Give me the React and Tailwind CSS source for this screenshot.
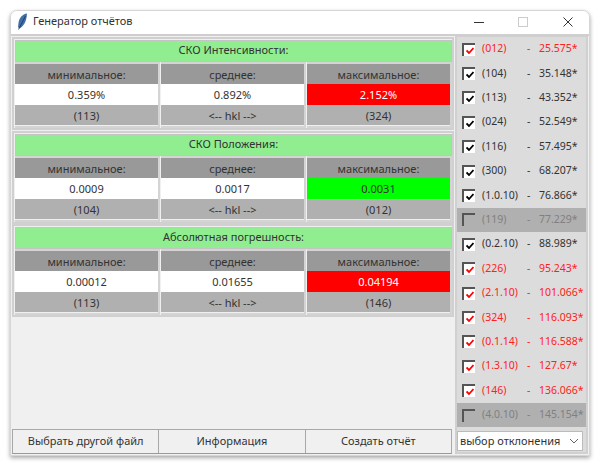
const sections = [
  { title: 'СКО Интенсивности:', min: '0.359%', avg: '0.892%', max: '2.152%', maxBg: 'bg-[#ff0000] text-white', hklMin: '(113)', hklMax: '(324)' },
  { title: 'СКО Положения:', min: '0.0009', avg: '0.0017', max: '0.0031', maxBg: 'bg-[#00ff00] text-[#333]', hklMin: '(104)', hklMax: '(012)' },
  { title: 'Абсолютная погрешность:', min: '0.00012', avg: '0.01655', max: '0.04194', maxBg: 'bg-[#ff0000] text-white', hklMin: '(113)', hklMax: '(146)' },
];

const peaks = [
  { hkl: '(012)', angle: '25.575*', state: 'bad' },
  { hkl: '(104)', angle: '35.148*' },
  { hkl: '(113)', angle: '43.352*' },
  { hkl: '(024)', angle: '52.549*' },
  { hkl: '(116)', angle: '57.495*' },
  { hkl: '(300)', angle: '68.207*' },
  { hkl: '(1.0.10)', angle: '76.866*' },
  { hkl: '(119)', angle: '77.229*', state: 'off' },
  { hkl: '(0.2.10)', angle: '88.989*' },
  { hkl: '(226)', angle: '95.243*', state: 'bad' },
  { hkl: '(2.1.10)', angle: '101.066*', state: 'bad' },
  { hkl: '(324)', angle: '116.093*', state: 'bad' },
  { hkl: '(0.1.14)', angle: '116.588*', state: 'bad' },
  { hkl: '(1.3.10)', angle: '127.67*', state: 'bad' },
  { hkl: '(146)', angle: '136.066*', state: 'bad' },
  { hkl: '(4.0.10)', angle: '145.154*', state: 'off' },
];

function StatColumn({ label, value, valueClass, hkl }) {
  return (
    <div className="flex flex-1 flex-col border-y-2 border-r-2 border-[#d4d4d4] text-center leading-[22px]">
      <div className="h-[20px] bg-[#999999] text-[#333]">{label}</div>
      <div className={`h-[21px] ${valueClass}`}>{value}</div>
      <div className="h-[20px] bg-[#b0b0b0] text-[#333]">{hkl}</div>
    </div>
  );
}

function Section({ s }) {
  return (
    <div className="flex h-[93px] flex-col border-2 border-[#d0d0d0] pt-[1px] pl-[1px]">
      <div className="h-[22px] shrink-0 border border-[#c4c4c4] bg-[#90ee90] text-center leading-[18px] text-[#333]">
        {s.title}
      </div>
      <div className="flex flex-1 gap-[1px]">
        <StatColumn label="минимальное:" value={s.min} valueClass="bg-white text-[#333]" hkl={s.hklMin} />
        <StatColumn label="среднее:" value={s.avg} valueClass="bg-white text-[#333]" hkl="<-- hkl -->" />
        <StatColumn label="максимальное:" value={s.max} valueClass={s.maxBg} hkl={s.hklMax} />
      </div>
    </div>
  );
}

function PeakRow({ peak }) {
  const off = peak.state === 'off';
  const color = off ? 'text-[#808080]' : peak.state === 'bad' ? 'text-[#ff2020]' : 'text-[#333]';
  return (
    <div className={`flex h-[24.4px] items-center pl-[5px] text-[10.5px] ${off ? 'bg-[#b0b0b0]' : ''} ${color}`}>
      <span className={`flex h-[13px] w-[13px] shrink-0 items-center justify-center border-t-2 border-l-2 border-t-[#555] border-l-[#555] ${off ? 'bg-[#b0b0b0]' : 'bg-white'}`}>
        {!off && (
          <svg width="8" height="7" viewBox="0 0 8 7" fill="none">
            <path d="M0.5 3.5 L3 6 L7.5 1" stroke={peak.state === 'bad' ? '#ff0000' : '#000'} strokeWidth="1.8" />
          </svg>
        )}
      </span>
      <span className="ml-[7px] w-[45px]">{peak.hkl}</span>
      <span className="w-[12px]">-</span>
      <span>{peak.angle}</span>
    </div>
  );
}

export default function App() {
  return (
    <div className="h-[470px] w-[600px] overflow-hidden bg-white pt-[10px] pl-[10px] text-[11px]" style={{ fontFamily: '"Noto Sans", sans-serif' }}>
      <div className="flex h-[446px] w-[580px] flex-col overflow-hidden rounded-t-[7px] border border-[#d6d6d6] bg-[#f0f0f0] shadow-[0_2px_4px_rgba(0,0,0,0.35)]">
        {/* Title bar */}
        <div className="flex h-[25px] shrink-0 items-center border-b-2 border-[#cfcfcf] bg-white pb-[2px] text-[11px] text-[#333]">
          <svg className="ml-[6px]" width="11" height="17" viewBox="0 0 11 17">
            <path d="M10 0.5 C5.5 1 2 5 1.5 10 L1 14 L2.3 15.5 C6.5 13.5 9.5 9 10 0.5 Z" fill="#3f6fa8" />
            <path d="M8.5 3 L1.5 16.5" stroke="#1d3557" strokeWidth="0.8" />
          </svg>
          <span className="ml-[5px]">Генератор отчётов</span>
          <div className="ml-auto flex items-center pr-[16px]">
            <svg className="mr-[34px]" width="10" height="10" viewBox="0 0 10 10"><path d="M0 5.5 H10" stroke="#333" strokeWidth="1" /></svg>
            <svg className="mr-[35px]" width="10" height="10" viewBox="0 0 10 10"><rect x="0.5" y="0.5" width="9" height="9" fill="none" stroke="#ccc" /></svg>
            <svg width="10" height="10" viewBox="0 0 10 10"><path d="M0.5 0.5 L9.5 9.5 M9.5 0.5 L0.5 9.5" stroke="#333" strokeWidth="1" /></svg>
          </div>
        </div>

        <div className="flex min-h-0 flex-1 px-[1px] pb-[1px]">
          {/* Left column */}
          <div className="flex w-[442px] shrink-0 flex-col gap-[0.5px] pt-[1px]">
            {sections.map((s) => <Section key={s.title} s={s} />)}
            <div className="mt-auto mr-[2px] flex h-[25px] border border-[#a8a8a8] border-b-[#999] bg-[#f0f0f0] text-[#333]">
              {['Выбрать другой файл', 'Информация', 'Создать отчёт'].map((t) => (
                <button key={t} className="flex-1 border-r border-[#a8a8a8] text-center last:border-r-0">{t}</button>
              ))}
            </div>
          </div>

          {/* Peak list */}
          <div className="ml-[1px] flex w-[133px] shrink-0 flex-col border-x-2 border-t border-b-2 border-[#d0d0d0] bg-[#dcdcdc]">
            <div className="flex flex-col">
              {peaks.map((p) => <PeakRow key={p.hkl} peak={p} />)}
            </div>
            <div className="mt-auto mb-[1px] flex h-[20px] w-[126px] items-center justify-between border border-[#bbb] bg-white pr-[3px] pl-[2px] text-[#333]">
              <span>выбор отклонения</span>
              <svg width="10" height="6" viewBox="0 0 10 6" fill="none"><path d="M1 1 L5 5 L9 1" stroke="#666" strokeWidth="1" /></svg>
            </div>
          </div>
        </div>
      </div>
    </div>
  );
}
